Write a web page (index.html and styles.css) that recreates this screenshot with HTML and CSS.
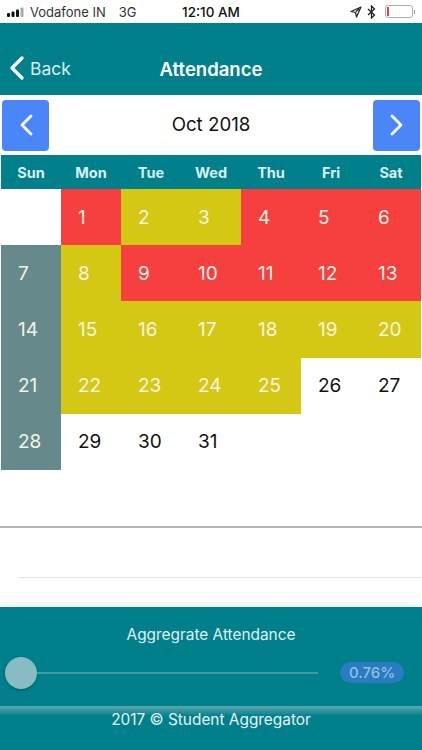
FILE: index.html
```html
<!DOCTYPE html>
<html lang="en">
    <head>
        <meta charset="UTF-8" />
        <meta name="viewport" content="width=device-width, initial-scale=1.0" />
        <title>Attendance</title>
        <link rel="stylesheet" href="styles.css">
    </head>
    <body>
        <div class="status">
            <div class="carrier">
                <svg class="signal" width="20" height="10" viewBox="0 0 20 10">
                    <rect x="0" y="6" width="3" height="4" rx="1" fill="#111" />
                    <rect x="4.5" y="4.5" width="3" height="5.5" rx="1" fill="#111" />
                    <rect x="9" y="2.5" width="3" height="7.5" rx="1" fill="#111" />
                    <rect x="13.500" y="0.500" width="3" height="9.500" rx="1" fill="#aaa" />
                </svg>
                <span>Vodafone IN</span>
                <span class="net">3G</span>
            </div>
            <div class="clock">12:10 AM</div>
            <div class="indicators">
                <svg width="12" height="12" viewBox="0 0 12 12">
                    <path d="M11 1 L1 5.500 L5.500 6.500 L6.500 11 Z M9 3 L5.800 5.800" fill="none" stroke="#222" stroke-width="1.200" stroke-linejoin="round" />
                </svg>
                <svg width="9" height="14" viewBox="0 0 9 14">
                    <path d="M1 4 L7.500 10 L4.500 13 L4.500 1 L7.500 4 L1 10" fill="none" stroke="#222" stroke-width="1.300" />
                </svg>
                <div class="battery"><div class="charge"></div></div>
                <div class="nub"></div>
            </div>
        </div>

        <div class="header">
            <div class="back">
                <svg width="16" height="24" viewBox="0 0 16 24">
                    <path d="M13 2 L3 12 L13 22" fill="none" stroke="#fff" stroke-width="3.200" stroke-linecap="round" stroke-linejoin="round" />
                </svg>
                <span>Back</span>
            </div>
            <h1>Attendance</h1>
        </div>

        <div class="month">
            <button class="arrow">
                <svg width="16" height="24" viewBox="0 0 16 24">
                    <path d="M13 3 L4 12 L13 21" fill="none" stroke="#fff" stroke-width="2.800" stroke-linecap="round" stroke-linejoin="round" />
                </svg>
            </button>
            <div class="title">Oct 2018</div>
            <button class="arrow">
                <svg width="16" height="24" viewBox="0 0 16 24">
                    <path d="M3 3 L12 12 L3 21" fill="none" stroke="#fff" stroke-width="2.800" stroke-linecap="round" stroke-linejoin="round" />
                </svg>
            </button>
        </div>

        <div class="days">
            <span>Sun</span><span>Mon</span><span>Tue</span><span>Wed</span><span>Thu</span><span>Fri</span><span>Sat</span>
        </div>

        <div class="grid">
            <div class="cell"></div>
            <div class="cell red">1</div>
            <div class="cell yellow">2</div>
            <div class="cell yellow">3</div>
            <div class="cell red">4</div>
            <div class="cell red">5</div>
            <div class="cell red">6</div>

            <div class="cell grey">7</div>
            <div class="cell yellow">8</div>
            <div class="cell red">9</div>
            <div class="cell red">10</div>
            <div class="cell red">11</div>
            <div class="cell red">12</div>
            <div class="cell red">13</div>

            <div class="cell grey">14</div>
            <div class="cell yellow">15</div>
            <div class="cell yellow">16</div>
            <div class="cell yellow">17</div>
            <div class="cell yellow">18</div>
            <div class="cell yellow">19</div>
            <div class="cell yellow">20</div>

            <div class="cell grey">21</div>
            <div class="cell yellow">22</div>
            <div class="cell yellow">23</div>
            <div class="cell yellow">24</div>
            <div class="cell yellow">25</div>
            <div class="cell">26</div>
            <div class="cell">27</div>

            <div class="cell grey">28</div>
            <div class="cell">29</div>
            <div class="cell">30</div>
            <div class="cell">31</div>
        </div>

        <div class="rule"></div>
        <div class="rule-inner"></div>

        <div class="aggregate">
            <div class="label">Aggregrate Attendance</div>
            <div class="slider">
                <div class="thumb"></div>
                <div class="track"></div>
                <div class="badge">0.76%</div>
            </div>
        </div>
        <div class="footer">2017 © Student Aggregator</div>
    </body>
</html>
```

FILE: styles.css
```css
html,
body {
    margin: 0;
    height: 750px;
    overflow: hidden;
}
body {
    background: #fff;
    font-family: Inter, "Liberation Sans", sans-serif;
    color: #111;
    display: flex;
    flex-direction: column;
}
h1 {
    margin: 0;
}

.status {
    height: 23px;
    padding: 0 7px;
    display: grid;
    grid-template-columns: 1fr auto 1fr;
    align-items: center;
    font-size: 13px;
    color: #333;
}
.carrier {
    display: flex;
    align-items: center;
    gap: 3px;
}
.carrier .net {
    margin-left: 10px;
}
.clock {
    font-size: 13.500px;
    font-weight: 500;
    color: #111;
}
.indicators {
    display: flex;
    align-items: center;
    justify-content: flex-end;
    gap: 5px;
}
.battery {
    width: 24px;
    height: 9px;
    margin-left: 4px;
    border: 1px solid #aaa;
    border-radius: 3px;
    padding: 1px;
}
.charge {
    width: 2px;
    height: 100%;
    background: #e0473f;
}
.nub {
    width: 1px;
    height: 4px;
    margin-left: -4px;
    background: #999;
}

.header {
    height: 72px;
    box-sizing: border-box;
    padding-bottom: 14px;
    background: #01808c;
    color: #fff;
    display: flex;
    align-items: flex-end;
    justify-content: center;
    position: relative;
}
.header h1 {
    font-size: 18.500px;
    font-weight: 600;
    line-height: 24px;
}
.back {
    position: absolute;
    left: 9px;
    bottom: 15px;
    display: flex;
    align-items: center;
    gap: 5px;
    font-size: 17.500px;
    color: #d8eef0;
}

.month {
    height: 60px;
    padding: 0 2px;
    display: flex;
    align-items: center;
    justify-content: space-between;
}
.month .title {
    padding-bottom: 2px;
    font-size: 18.700px;
}
.arrow {
    width: 47px;
    height: 51px;
    padding: 0;
    border: 0;
    border-radius: 4px;
    background: #4a86f7;
    display: flex;
    align-items: center;
    justify-content: center;
}

.days {
    height: 34px;
    margin: 0 1px;
    background: #01808c;
    color: #d8f0f2;
    display: grid;
    grid-template-columns: repeat(7, 60px);
    align-items: center;
    justify-items: center;
    font-size: 14.500px;
    font-weight: 700;
}

.grid {
    margin: 0 1px;
    display: grid;
    grid-template-columns: repeat(7, 60px);
    grid-auto-rows: 56.200px;
}
.cell {
    padding: 0 0 0 17px;
    display: flex;
    align-items: center;
    font-size: 19px;
    color: #111;
}
.cell.red,
.cell.yellow,
.cell.grey {
    color: #f4f4e4;
}
.cell.red {
    background: #f63f3f;
}
.cell.yellow {
    background: #d4c815;
}
.cell.grey {
    background: #668a8c;
}

.rule {
    height: 2px;
    margin-top: 56px;
    background: #b4b4b4;
}
.rule-inner {
    height: 1px;
    margin: 49px 0 0 18px;
    background: #e4e4e4;
}

.aggregate {
    margin-top: 29px;
    height: 99px;
    box-sizing: border-box;
    padding-top: 19px;
    background: #01808c;
    box-shadow: 0 -3px 8px rgba(0, 0, 0, 0.08);
    color: #dff1f3;
}
.label {
    text-align: center;
    font-size: 15.400px;
    line-height: 18px;
}
.slider {
    margin-top: 13px;
    padding-left: 5px;
    display: flex;
    align-items: center;
}
.thumb {
    width: 32px;
    height: 32px;
    border-radius: 50%;
    background: #86bcc2;
    box-shadow: 0 1px 3px rgba(0, 0, 0, 0.3);
}
.track {
    width: 281px;
    height: 1.500px;
    background: #3f9aa3;
}
.badge {
    width: 64px;
    height: 21px;
    margin-left: 22px;
    border-radius: 11px;
    background: #2a7bc0;
    color: #8fc3de;
    font-size: 15px;
    font-weight: 500;
    line-height: 21px;
    text-align: center;
}

.footer {
    flex: 1;
    padding-top: 5px;
    background: linear-gradient(#5da8af, #01808c 10px);
    color: #e6f4f5;
    text-align: center;
    font-size: 15.400px;
    line-height: 18px;
}
```
